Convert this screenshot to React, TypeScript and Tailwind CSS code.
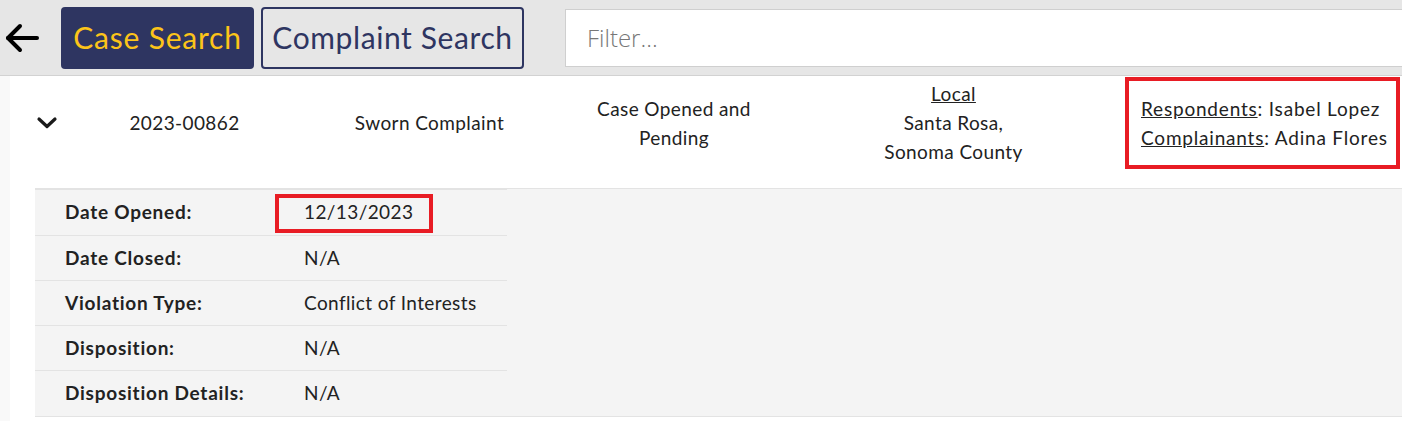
import React from "react";

const rows: [string, string][] = [
  ["Date Opened:", "12/13/2023"],
  ["Date Closed:", "N/A"],
  ["Violation Type:", "Conflict of Interests"],
  ["Disposition:", "N/A"],
  ["Disposition Details:", "N/A"],
];

export default function App() {
  return (
    <div className="w-[1402px] h-[421px] overflow-hidden bg-white text-[#222] font-['Lato','Open_Sans',sans-serif]">
      {/* Header */}
      <div className="flex items-center h-[76px] bg-[#e6e6e6] border-b border-[#d2d2d2]">
        <div className="w-[61px] pl-[4px] flex items-center">
          <svg width="36" height="36" viewBox="0 0 36 36" fill="none" stroke="#000" strokeWidth="4" strokeLinecap="round" strokeLinejoin="round">
            <path d="M33 18H4" />
            <path d="M16 6L4 18L16 30" />
          </svg>
        </div>
        <button className="h-[62px] w-[193px] rounded-[4px] bg-[#2e3561] text-[#fcc419] text-[30px] tracking-[0.8px] flex items-center justify-center">
          Case Search
        </button>
        <button className="ml-[7px] h-[62px] w-[263px] rounded-[4px] border-2 border-[#2e3561] text-[#2e3561] text-[30px] tracking-[0.6px] flex items-center justify-center">
          Complaint Search
        </button>
        <div className="ml-[41px] flex-1 mr-[-20px] h-[58px] bg-white border border-[#cfcfcf] flex items-center pl-[21px]">
          <span className="text-[24px] text-[#777] font-light font-['Open_Sans',sans-serif]">Filter...</span>
        </div>
      </div>

      <div className="flex">
        <div className="w-[10px] h-[345px] bg-[#f9f9f9]" />
        <div className="flex-1">
          {/* Case row */}
          <div className="h-[112px] pb-[19px] flex text-[19px] tracking-[0.4px] leading-[29px]">
            <div className="w-[74px] flex items-center justify-center">
              <svg width="22" height="16" viewBox="0 0 22 16" fill="none" stroke="#1a1a1a" strokeWidth="3.2" strokeLinecap="round" strokeLinejoin="round">
                <path d="M3 4L11 11.5L19 4" />
              </svg>
            </div>
            <div className="w-[201px] flex items-center justify-center">2023-00862</div>
            <div className="w-[289px] flex items-center justify-center">Sworn Complaint</div>
            <div className="w-[200px] flex items-center justify-center text-center">
              Case Opened and
              <br />
              Pending
            </div>
            <div className="w-[351px] pl-[8px] flex items-center justify-center text-center">
              <div>
                <div className="underline">Local</div>
                <div>Santa Rosa,</div>
                <div>Sonoma County</div>
              </div>
            </div>
            <div className="w-[275px] flex items-center">
              <div className="w-full h-[92px] border-4 border-[#e81c24] pl-[12px] flex flex-col justify-center tracking-[0.8px]">
                <div>
                  <span className="underline">Respondents</span>: Isabel Lopez
                </div>
                <div>
                  <span className="underline">Complainants</span>: Adina Flores
                </div>
              </div>
            </div>
          </div>

          {/* Details */}
          <div className="ml-[25px] bg-[#f4f4f4] border-t border-b border-[#e3e3e3]">
            <div className="w-[472px] border-t border-[#e3e3e3] text-[19px] tracking-[0.4px]">
              {rows.map(([label, value], i) => (
                <div
                  key={label}
                  className={`flex items-center ${i === 0 ? "h-[46px]" : "h-[45px]"} ${i < rows.length - 1 ? "border-b border-[#e3e3e3]" : ""}`}
                >
                  <div className="w-[269px] pl-[30px] font-bold tracking-[0.75px]">{label}</div>
                  {i === 0 ? (
                    <div className="relative">
                      <span>{value}</span>
                      <div className="absolute left-[-29px] top-[-4px] w-[158px] h-[39px] border-4 border-[#e81c24]" />
                    </div>
                  ) : (
                    <div>{value}</div>
                  )}
                </div>
              ))}
            </div>
          </div>
        </div>
      </div>
    </div>
  );
}
